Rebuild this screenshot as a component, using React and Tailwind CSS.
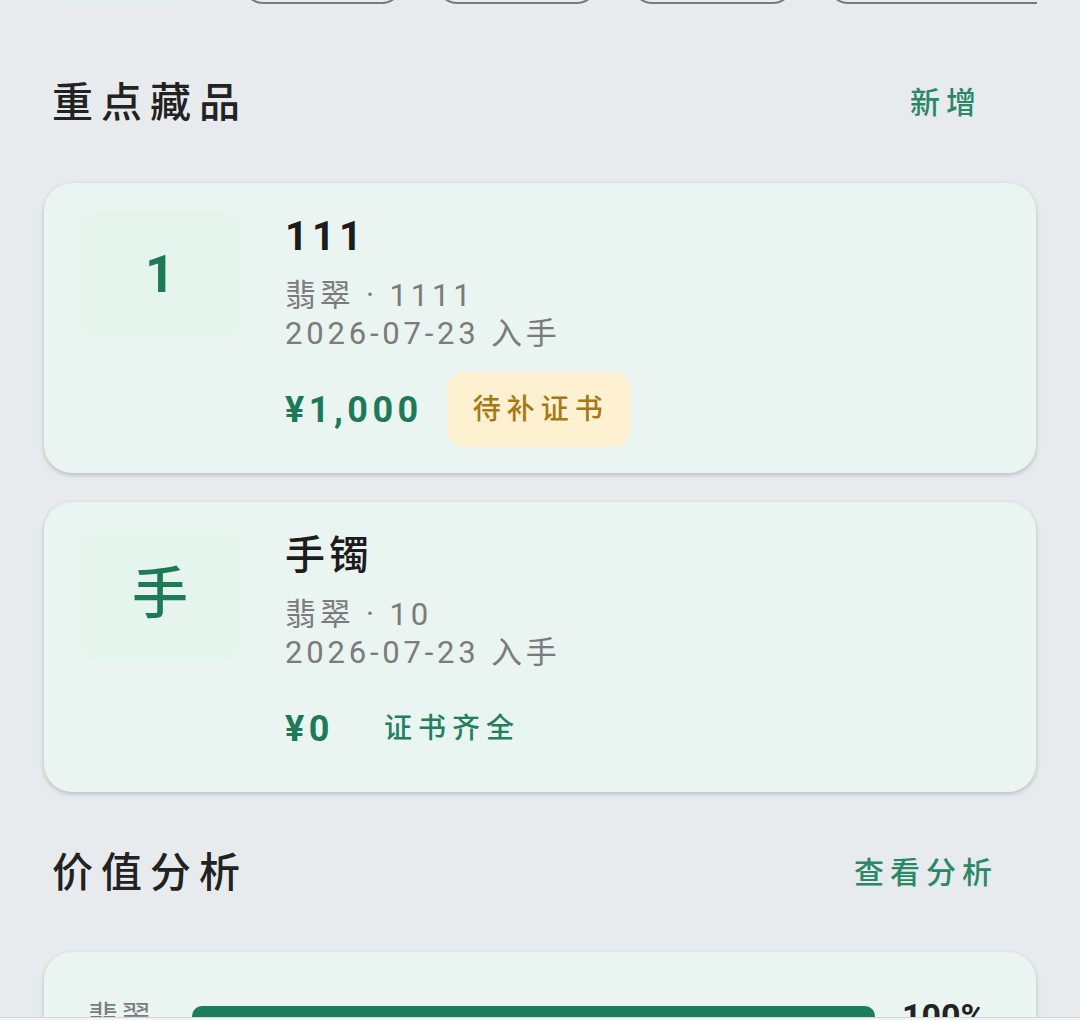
import React from 'react';

const font = { fontFamily: 'Roboto, "Noto Sans CJK SC", sans-serif' };

const items = [
  { mark: '1', markCls: 'text-[52px] font-bold', name: '111', nameCls: 'font-bold', kind: '翡翠', size: '1111', date: '2026-07-23', price: '¥1,000', cert: 'pending' },
  { mark: '手', markCls: 'text-[56px] font-medium', name: '手镯', nameCls: 'font-medium', kind: '翡翠', size: '10', date: '2026-07-23', price: '¥0', cert: 'ok' },
];

const SectionHead = ({ title, action, actionPad }) => (
  <div className={`flex items-center justify-between pl-[52px] ${actionPad}`}>
    <h2 className="text-[41px] leading-[48px] font-medium tracking-[8px] text-[#222]">{title}</h2>
    <button className="text-[30px] leading-[40px] font-medium tracking-[6px] text-[#2b8866]">{action}</button>
  </div>
);

const ItemCard = ({ item }) => (
  <div className="flex rounded-[28px] bg-[#eaf4f1] pl-[36px] pr-6 pt-[27px] pb-[26px] shadow-[0_2px_5px_rgba(0,0,0,0.2)]">
    <div className="flex h-[130px] w-[160px] shrink-0 items-center justify-center rounded-[14px] bg-[#e6f4ee]">
      <span className={`leading-none text-[#1d7a58] ${item.markCls}`}>{item.mark}</span>
    </div>
    <div className="ml-[45px] flex flex-col">
      <div className={`h-[54px] text-[40px] leading-[54px] tracking-[4px] text-[#1c1c1c] ${item.nameCls}`}>{item.name}</div>
      <div className="mt-[13px] text-[31px] leading-[38px] tracking-[3.8px] text-[#7b7b7b]">
        {item.kind} · {item.size}
      </div>
      <div className="text-[31px] leading-[38px] tracking-[3.8px] text-[#7b7b7b]">{item.date} 入手</div>
      <div className="mt-[19px] flex h-[75px] items-center gap-[24px]">
        <span className="text-[36px] font-bold tracking-[4.5px] text-[#1d7a58]">{item.price}</span>
        {item.cert === 'pending' ? (
          <span className="flex h-[75px] items-center rounded-[18px] bg-[#fdf1d2] pl-[26px] pr-[22px] text-[28px] font-medium tracking-[6px] text-[#a57a16]">
            待补证书
          </span>
        ) : (
          <span className="flex h-[65px] items-center rounded-[18px] bg-[#e8f5f0] pl-[26px] pr-[24px] text-[28px] font-medium tracking-[6px] text-[#237f5d]">
            证书齐全
          </span>
        )}
      </div>
    </div>
  </div>
);

export default function App() {
  const chips = [
    { w: 'w-[145px]', active: true },
    { w: 'w-[159px]' },
    { w: 'w-[160px]' },
    { w: 'w-[161px]' },
    { w: 'w-[260px]' },
  ];

  return (
    <div className="min-h-screen overflow-hidden bg-[#e8ebee] pb-20" style={font}>
      {/* filter chips, scrolled mostly off screen */}
      <div className="-mt-[56px] ml-[50px] flex w-[987px] gap-[35px] overflow-hidden">
        {chips.map((c, i) => (
          <div
            key={i}
            className={`h-[60px] shrink-0 rounded-[20px] ${c.w} ${
              c.active ? 'mr-[13px] bg-[#e3efe9]' : 'border-2 border-[#7a7a7a]'
            }`}
          />
        ))}
      </div>

      <div className="mt-[75px]">
        <SectionHead title="重点藏品" action="新增" actionPad="pr-[98px]" />
      </div>

      <div className="mx-[44px] mt-[56px] flex flex-col gap-[29px]">
        {items.map((it) => (
          <ItemCard key={it.name} item={it} />
        ))}
      </div>

      <div className="mt-[57px]">
        <SectionHead title="价值分析" action="查看分析" actionPad="pr-[82px]" />
      </div>

      <div className="mx-[44px] mt-[55px] rounded-[28px] bg-[#eaf4f1] px-[44px] pt-[44px] pb-10 shadow-[0_2px_5px_rgba(0,0,0,0.2)]">
        <div className="flex h-[40px] items-center">
          <span className="w-[104px] text-[30px] tracking-[3px] text-[#7b7b7b]">翡翠</span>
          <div className="h-[20px] flex-1 rounded-full bg-[#1b7f5e]" />
          <span className="ml-[27px] w-[90px] text-[34px] font-bold text-[#222]">100%</span>
        </div>
      </div>

      {/* bottom bar edge */}
      <div className="fixed bottom-0 left-0 right-0 h-[3px] border-t border-[#d3d6d9] bg-[#f3f4f5]" />
    </div>
  );
}
